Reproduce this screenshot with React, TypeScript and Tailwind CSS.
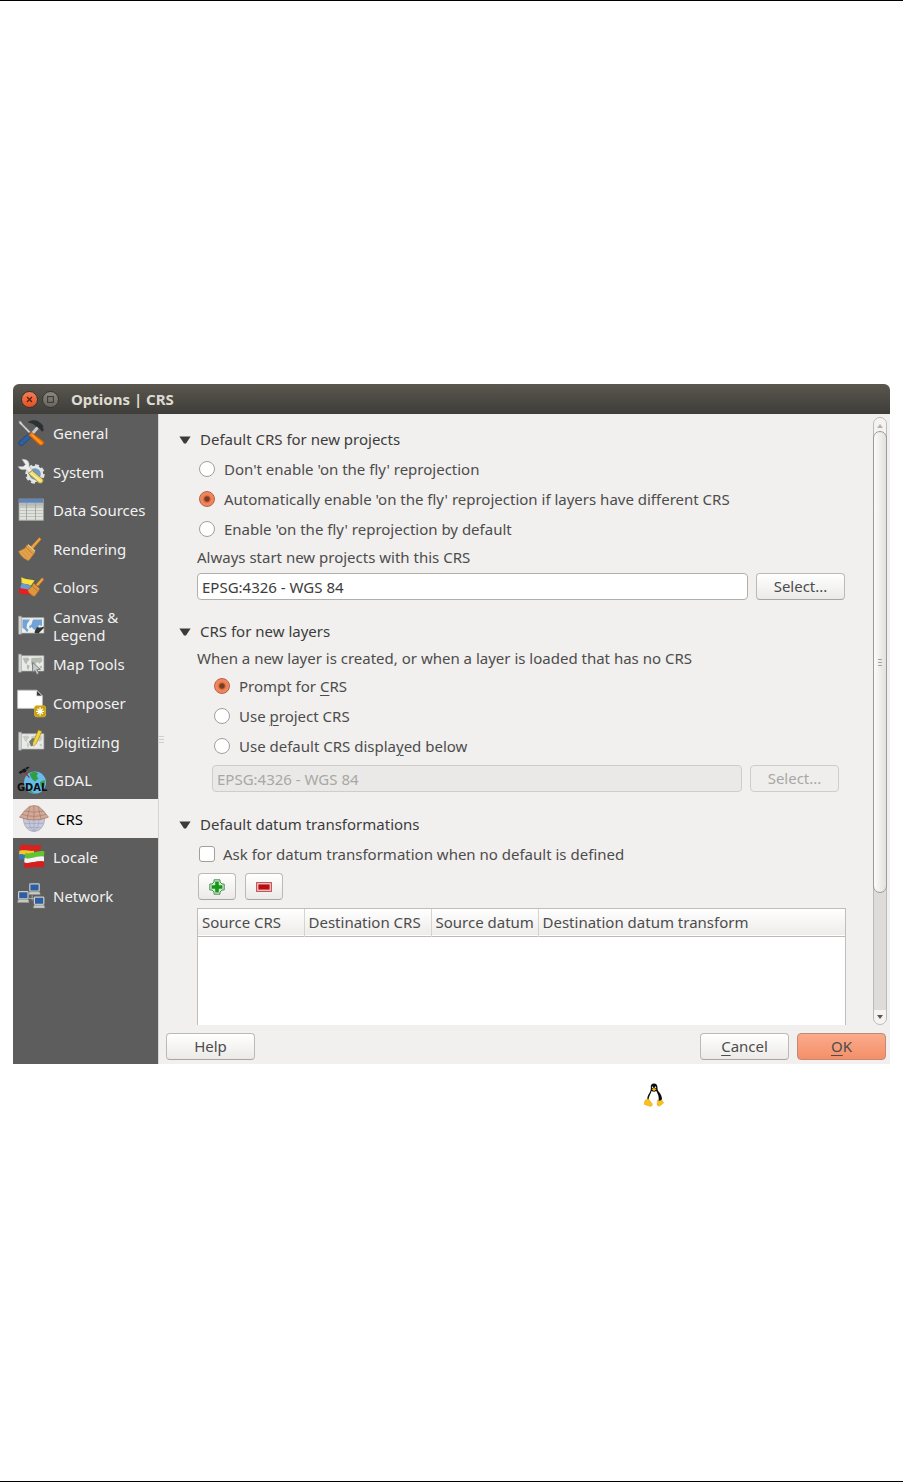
import { useState } from "react";
import type { ReactNode } from "react";
import clsx from "clsx";

function GeneralIcon() {
  return (
    <>
      <path d="M2 2 L4 2.6 L5.5 5 L14 13.4 L12.6 14.8 L4.6 6.2 L2.4 4.6 Z" fill="#d9dcda" stroke="#8b8e8b" strokeWidth=".5" />
      <path d="M11 3.2 C14 .8 19 .8 21.5 2.6 L23.5 4 L26 6.4 L26.6 12 L24.8 12.4 L22.6 9.8 L20.2 10.2 L18 6.5 C16 4.6 13.5 4.2 11 3.2 Z" fill="#2c3233" />
      <path d="M19.6 7.4 L21.8 9.6 L13.8 18.4 L11.8 16.2 Z" fill="#c9cbc8" />
      <path d="M13.2 13.4 L16.2 16.4 L5.6 26.2 C3.4 27.4 .6 25 2 22.8 Z" fill="#2f5f9e" stroke="#1d3f73" strokeWidth=".7" />
      <path d="M14.4 13.2 L11.6 16 L22.6 26 C25 27.4 28 24.4 26.4 22.4 Z" fill="#f57900" stroke="#b85200" strokeWidth=".7" />
      <path d="M14.6 15.4 L24.4 24.6" stroke="#ffa548" strokeWidth="1.2" />
    </>
  );
}

function SystemIcon() {
  return (
    <>
      <circle cx="18" cy="16" r="8.2" fill="none" stroke="#dfe2df" strokeWidth="3" strokeDasharray="3.8 2.6" />
      <circle cx="18" cy="16" r="7" fill="#6f9bcb" stroke="#e3e6e3" strokeWidth="2.4" />
      <path d="M5 1.4 C10 .6 13 4 12 8.2 L15.6 12.6 L12.8 15.4 L8.6 11.4 C5 12.4 2 11 1.2 8.4 L6.2 8.6 L8.4 6.4 Z" fill="#eceeec" stroke="#a5a8a5" strokeWidth=".6" />
      <path d="M11.2 15.4 L15.2 12.4 L26 21.4 C26.6 24.2 24.4 26 22.2 25 Z" fill="#ecd774" stroke="#95812a" strokeWidth=".8" />
      <path d="M14 15.2 L23.6 23.2" stroke="#fff2a8" strokeWidth="1.2" />
    </>
  );
}

function TableIcon() {
  return (
    <>
      <rect x="2" y="3" width="24.4" height="21.4" fill="#d3d7cf" stroke="#a3a69f" strokeWidth=".7" />
      <rect x="2" y="3" width="24.4" height="3.8" fill="#5f87bd" />
      <rect x="2.2" y="7" width="24" height="3.4" fill="#b9bcb6" />
      <path d="M3 13 H25.6 M3 16 H25.6 M3 19 H25.6 M3 22 H25.6" stroke="#eceeea" strokeWidth="1.2" />
      <path d="M3 11.5 H25.6 M3 14.5 H25.6 M3 17.5 H25.6 M3 20.5 H25.6" stroke="#b2b5ae" strokeWidth=".6" />
      <path d="M9.5 7 V24.2 M18.5 7 V24.2" stroke="#a0a39c" strokeWidth=".9" />
    </>
  );
}

function BroomIcon() {
  return (
    <>
      <path d="M22.4 2.2 L24.4 4.2 L16 14 L13.6 11.8 Z" fill="#e7a44a" stroke="#9c6218" strokeWidth=".7" />
      <path d="M10.2 9.8 L18 17 L16.4 19.4 L11.8 25.6 C7.4 24.4 3.4 20.8 1.6 16.4 L8 13.2 Z" fill="#e2a04a" stroke="#b37a30" strokeWidth=".6" />
      <path d="M9 12.4 L15.6 18.6" stroke="#b9762a" strokeWidth=".8" />
      <path d="M5 17 L10.4 22.8 M8 15.4 L13 20.8" stroke="#d08f3a" strokeWidth=".7" />
      <path d="M11 9.8 L18 16.2" stroke="#f7cf8d" strokeWidth="1.3" />
    </>
  );
}

function ColorsIcon() {
  return (
    <>
      <path d="M4.4 4 C8 7 13 6 17.6 7.6 L14 12.6 C10 10.6 7 11.4 4.6 10 Z" fill="#fbe33a" />
      <path d="M4.6 10 C8 11.6 10.6 10.8 14.6 12.6 L11 17.6 C8 15.6 5.4 16.4 3.2 15 Z" fill="#6c9bd0" />
      <path d="M2.6 14.8 C6 16.6 10 15.4 14 17.6 L15 22.4 C10 20 6 22.4 1.8 20 Z" fill="#ec1c24" />
      <path d="M25 4.6 L27 6.4 L21 13.6 L18.8 11.6 Z" fill="#e7a44a" stroke="#9c6218" strokeWidth=".6" />
      <path d="M16.6 10 L23 15.8 L21.6 18.2 L17.6 23.6 C14.6 22.8 12 20.4 10.6 17.2 L14.6 13.4 Z" fill="#dc9740" stroke="#9a611c" strokeWidth=".7" />
      <path d="M15.4 13.2 L20.6 18" stroke="#b06e24" strokeWidth=".8" />
    </>
  );
}

function MapSheet({ land }: { land: string }) {
  return (
    <>
      <path d="M3.6 5.8 H26.8 V21 H3.6 Z" fill="#e9ebe8" stroke="#b7bab6" strokeWidth=".7" />
      <path d="M1.6 4.2 H4.4 V22.2 H1.6 Z" fill="#d2d5d1" stroke="#9a9d99" strokeWidth=".6" />
      <path d="M5.6 8 L11 7.4 L12.6 9.4 L10.6 11.4 L9.4 14.6 L7.6 12.6 Z M10 14.4 L12.8 15.8 L11.2 20 L9.8 18 Z M14.4 8 L25 7.6 L25.4 11 L22.6 13.8 L20.6 12 L18.6 13.6 L17.6 18.6 L15.6 17.2 L14 13 Z M22.6 16 L25 15.8 L25 18.6 L23 18.2 Z" fill={land} />
    </>
  );
}

function CanvasIcon() {
  return (
    <>
      <path d="M3.6 5.8 H26.8 V21 H3.6 Z" fill="#f0f1ef" stroke="#c4c7c3" strokeWidth=".7" />
      <path d="M1.6 4.2 H4.4 V22.2 H1.6 Z" fill="#d2d5d1" stroke="#9a9d99" strokeWidth=".6" />
      <path d="M5.4 7.6 H13 L10 12 L9.6 16 L11.6 18 L10 20.2 L7.4 17 L5.4 16 Z M16 7.6 H25 V14 L22 13 L20.6 16.4 L17 17.8 L14.6 15 L12.8 16.6 L12 14.2 L14.4 12.4 Z" fill="#72a2d6" />
      <path d="M17.6 21 C17.6 18.6 19 16.4 20.4 15 C22.4 16 25 15.6 26.8 14.6 L26.8 16 L21.4 21.4 Z" fill="#2e3436" />
    </>
  );
}

function MapToolsIcon() {
  return (
    <>
      <MapSheet land="#b6bbb2" />
      <path d="M15.6 12.4 L23.4 19.4 L19.8 19.6 L22 23.4 L19.8 24.4 L18 20.6 L15.6 22.6 Z" fill="#c8cbc8" stroke="#66686a" strokeWidth=".8" />
    </>
  );
}

function ComposerIcon() {
  return (
    <>
      <path d="M.6 1.2 H19.6 L25.4 7 V19.4 H.6 Z" fill="#fff" stroke="#bfc1bf" strokeWidth=".8" />
      <path d="M19.6 1.2 L25.4 7 H19.6 Z" fill="#303436" stroke="#dedfde" strokeWidth=".8" />
      <rect x="17.6" y="16.8" width="11" height="11" rx="1.8" fill="#c9a20c" stroke="#dcb92f" strokeWidth=".8" />
      <path d="M23.1 18.2 V26.4 M19 22.3 H27.2 M20.4 19.6 L25.8 25 M25.8 19.6 L20.4 25" stroke="#fff" strokeWidth="1.3" />
    </>
  );
}

function DigitizingIcon() {
  return (
    <>
      <MapSheet land="#c8ccc4" />
      <path d="M12 13.6 L15.6 10 L19.6 11.4 L17 17 L14 18.6 Z" fill="#72786f" />
      <path d="M21.4 2 L24.8 3.4 L19.4 15.6 L16.2 18.2 L16 14.4 Z" fill="#f4d53a" stroke="#a38718" strokeWidth=".7" />
      <path d="M16 14.4 L19.4 15.6 L16.2 18.2 Z" fill="#e9c98b" />
    </>
  );
}

function GdalIcon() {
  return (
    <>
      <circle cx="18" cy="16.6" r="11" fill="#66bde9" />
      <path d="M12.6 8 C15 5.6 19 5.6 21 7.4 L19.6 10 L21.4 12.4 L18 15.4 L15.4 13.4 L13.8 11 Z" fill="#2f9e45" />
      <path d="M23 16 L27.4 14 C28.6 17 27.8 20.8 26 22.8 L23.6 20 Z M12 24.4 L15 25.2 L16.6 27 L13 26.4 Z" fill="#389f4c" />
      <path d="M7.6 5.6 L12.4 11.6" stroke="#9b2f4b" strokeWidth="1.2" />
      <path d="M1.4 6.4 L4.4 4.2 L6.4 5.8 L3.6 8 Z M5.2 3.4 L8 2.2 L9.8 4.8 L7 7 L5.4 5.4 Z M8.4 1.8 L12 .4 L12.4 1.6 L9.8 3.8 Z" fill="#17191a" />
      <text x="0" y="25" fontFamily="'Liberation Sans Narrow', 'DejaVu Sans Condensed', sans-serif" fontWeight="700" fontSize="11" fill="#0c0d0e">GDAL</text>
    </>
  );
}

function CrsIcon() {
  return (
    <>
      <path d="M3.4 13 H24.6 C24.6 20.6 20.4 26.4 14 26.4 C7.6 26.4 3.4 20.6 3.4 13 Z" fill="#c6c8da" stroke="#9a9cb6" strokeWidth=".7" />
      <path d="M9 13 C9 20 11 25 14 26 C17 25 19 20 19 13 M14 13 V26 M4.4 18.4 H23.6 M7.4 22.6 H20.6" fill="none" stroke="#9a9cb6" strokeWidth=".6" />
      <path d="M9.4 1.4 L14 .6 L18.6 1.4 L23.6 6 L28.4 12.2 L21 14.4 L14 15 L7 14.4 L-.4 12.2 L4.4 6 Z" fill="#d3a896" stroke="#9d7668" strokeWidth=".7" />
      <path d="M4.4 6 L14 7.2 L23.6 6 M2 9.4 L8 10.8 L14 11.4 L20 10.8 L26 9.4 M9.6 1.8 L8.6 7 L7 14.2 M18.4 1.8 L19.4 7 L21 14.2 M14 1 V15" fill="none" stroke="#9d7668" strokeWidth=".6" />
    </>
  );
}

function LocaleIcon() {
  return (
    <>
      <path d="M3 2.4 C9 .6 13 4 23.6 1.8 V7.4 C14 9 9 6.4 2.4 7.8 Z" fill="#dd1f1f" />
      <path d="M2.4 7.8 C8 6.4 12 8.4 17 7.8 V12.6 H2 Z" fill="#f6c62c" />
      <path d="M2 11.4 C5 10.2 7 11.6 9 12 V16.6 C6 15.6 4 15.8 2 16.8 Z" fill="#3b73b9" />
      <path d="M8.4 10 C14 12 20 6.4 27.4 8.4 L27 13.6 C20 12 14 17 7.6 15 Z" fill="#5fc52e" />
      <path d="M7.6 15 C14 17 20 12 27 13.6 L27 18.8 C20 17 14 21.4 7.2 19.4 Z" fill="#f4f4f3" />
      <path d="M7.2 19.4 C14 21.4 20 17 27 18.8 L27.2 24.6 C20 22.6 14 26 6.8 24 Z" fill="#d91c1c" />
    </>
  );
}

function Computer({ x, y }: { x: number; y: number }) {
  return (
    <g transform={`translate(${x} ${y})`}>
      <rect x=".4" y=".4" width="9.4" height="7.2" rx=".8" fill="#2d5ea3" stroke="#c9ccc8" strokeWidth="1.2" />
      <path d="M0 8.4 H10.2 L10.8 11.2 H-.6 Z" fill="#c9ccc7" stroke="#93968f" strokeWidth=".5" />
    </g>
  );
}

function NetworkIcon() {
  return (
    <>
      <path d="M12 16.4 H17.6 M15.2 13.4 V18.4" stroke="#a9aca8" strokeWidth="1" />
      <Computer x={12.4} y={1.4} />
      <Computer x={1.2} y={9.2} />
      <Computer x={17} y={14.8} />
    </>
  );
}

const PAGES: { name: string; icon: ReactNode }[] = [
  { name: "General", icon: <GeneralIcon /> },
  { name: "System", icon: <SystemIcon /> },
  { name: "Data Sources", icon: <TableIcon /> },
  { name: "Rendering", icon: <BroomIcon /> },
  { name: "Colors", icon: <ColorsIcon /> },
  { name: "Canvas & Legend", icon: <CanvasIcon /> },
  { name: "Map Tools", icon: <MapToolsIcon /> },
  { name: "Composer", icon: <ComposerIcon /> },
  { name: "Digitizing", icon: <DigitizingIcon /> },
  { name: "GDAL", icon: <GdalIcon /> },
  { name: "CRS", icon: <CrsIcon /> },
  { name: "Locale", icon: <LocaleIcon /> },
  { name: "Network", icon: <NetworkIcon /> },
];

const BUTTON =
  "h-[27px] rounded-[4px] border border-[#bdbab6] border-b-[#a9a6a2] bg-linear-to-b from-white to-[#ebeae8] text-[#4c4c4c] disabled:border-[#cfcdca] disabled:bg-none disabled:bg-[#efeeed] disabled:text-[#a9a7a5]";

const FIELD =
  "h-[27px] min-w-0 flex-1 rounded-[4px] border border-[#b2afab] bg-white px-1 text-[#3c3c3c] disabled:border-[#cfcdca] disabled:bg-[#eae9e7] disabled:text-[#a9a7a5]";

function Section({ title, children }: { title: string; children: ReactNode }) {
  const [open, setOpen] = useState(true);
  return (
    <section>
      <button type="button" aria-expanded={open} onClick={() => setOpen(!open)} className="flex h-[30px] items-center gap-[9px] text-[#3c3c3c]">
        <svg viewBox="0 0 12 10" className={clsx("h-[10px] w-3", !open && "-rotate-90")}>
          <path d="M.4 2.6 H11.6 L7 9.4 H5 Z" fill="#3c3b37" />
        </svg>
        {title}
      </button>
      {open && <div className="pl-[18px]">{children}</div>}
    </section>
  );
}

function Radio({ name, checked, children }: { name: string; checked?: boolean; children: ReactNode }) {
  return (
    <label className="flex h-[30px] items-center gap-[9px] pl-[2px]">
      <input
        type="radio"
        name={name}
        defaultChecked={checked}
        className="size-4 shrink-0 appearance-none rounded-full border border-[#a19f9b] bg-white checked:border-[#b45f42] checked:bg-[radial-gradient(circle,#7a3b25_0,#7a3b25_2px,#ef7f55_4px,#f08a60_7px)]"
      />
      <span>{children}</span>
    </label>
  );
}

function Key({ children }: { children: string }) {
  return <span className="underline decoration-1 underline-offset-[3px]">{children}</span>;
}

function Scrollbar() {
  return (
    <div className="mt-[3px] mr-[3px] flex w-[14px] shrink-0 flex-col rounded-full border border-[#bdbab6] bg-[#dddcda]">
      <button type="button" aria-label="Scroll up" className="-mb-2 flex h-[21px] shrink-0 justify-center rounded-t-full bg-[#f4f3f2] pt-[6px]">
        <svg viewBox="0 0 6 4" className="h-1 w-[6px]"><path d="M0 4 L3 0 L6 4 Z" fill="#b7b5b2" /></svg>
      </button>
      <div className="-mx-px flex h-[462px] flex-col items-center justify-center gap-[2px] rounded-full border border-[#9d9b97] bg-linear-to-r from-[#fbfbfb] to-[#e2e1df]">
        <span className="h-px w-1 bg-[#a5a39f]" />
        <span className="h-px w-1 bg-[#a5a39f]" />
        <span className="h-px w-1 bg-[#a5a39f]" />
      </div>
      <div className="min-h-0 flex-1" />
      <button type="button" aria-label="Scroll down" className="flex h-[14px] shrink-0 items-center justify-center rounded-b-full bg-[#f4f3f2]">
        <svg viewBox="0 0 6 4" className="h-1 w-[6px]"><path d="M0 0 L3 4 L6 0 Z" fill="#5a5855" /></svg>
      </button>
    </div>
  );
}

function Penguin() {
  return (
    <svg viewBox="0 0 20 24" role="img" aria-label="Linux" className="h-6 w-5">
      <path d="M10 .6 C7.4 .6 6.6 2.4 6.8 4.6 C7 7.4 6.4 8.6 5 10.8 C3.6 13 3.2 15 3 17 L6 22 H14 L18 17 C18.2 14 17 11.4 15 9 C13.4 7 13.6 6 13.4 4 C13.2 1.8 12.4 .6 10 .6 Z" fill="#0b0b0b" />
      <path d="M7.6 8 C9.4 9 11 9 12.2 7.8 C14 11 15.2 14 14.6 17.6 L13.6 22 H7 L4.6 16.6 C4.8 13.4 6.6 11 7.6 8 Z" fill="#fff" />
      <circle cx="8.6" cy="4.2" r=".8" fill="#fff" />
      <circle cx="11.4" cy="4.2" r=".8" fill="#fff" />
      <path d="M7.6 6 L10 5 L12.6 6 L10 8.2 Z" fill="#f5b800" />
      <path d="M4 15.6 L8.4 21 C8.4 23.4 6.4 23.8 4.6 22.8 L.4 21.4 C0 20 .8 19 1 17.6 Z" fill="#fcc21b" stroke="#c98f00" strokeWidth=".4" />
      <path d="M13.6 17 C15 18.4 16.4 18 17.6 16.4 L19.6 20 L15.6 23 C13.4 23.6 12.8 21.6 13.6 17 Z" fill="#fcc21b" stroke="#c98f00" strokeWidth=".4" />
    </svg>
  );
}

export default function App() {
  const [page, setPage] = useState("CRS");

  return (
    <div className="flex min-h-screen flex-col border-y border-black bg-white px-[13px] pt-[383px] font-['Noto_Sans','Open_Sans',sans-serif] text-[15px] text-[#4c4c4c]">
      <main className="overflow-hidden rounded-t-[6px] bg-[#f1f0ee]">
        <header className="flex h-[30px] items-center gap-1 bg-linear-to-b from-[#59574e] to-[#3e3d39] px-2">
          <button type="button" aria-label="Close" className="flex size-[17px] items-center justify-center rounded-full border border-[#38342e] bg-linear-to-b from-[#f47c54] to-[#e2511f]">
            <svg viewBox="0 0 7 7" className="size-[7px]"><path d="M1 1 L6 6 M6 1 L1 6" stroke="#54210f" strokeWidth="1.3" /></svg>
          </button>
          <button type="button" aria-label="Maximize" className="flex size-[17px] items-center justify-center rounded-full border border-[#38342e] bg-linear-to-b from-[#8a877d] to-[#67655d]">
            <svg viewBox="0 0 7 7" className="size-[7px]"><rect x=".6" y=".6" width="5.8" height="5.8" fill="none" stroke="#3c3b37" strokeWidth="1.1" /></svg>
          </button>
          <h1 className="ml-2 font-bold text-[#dfdbd2]">Options | CRS</h1>
        </header>

        <div className="flex">
          <nav className="w-[146px] shrink-0 border-r border-[#d6d4d1] bg-[#5d5d5d]">
            <ul className="flex h-[501px] flex-col">
              {PAGES.map((p) => (
                <li key={p.name} className="flex min-h-0 flex-1">
                  <button
                    type="button"
                    onClick={() => setPage(p.name)}
                    className={clsx(
                      "flex flex-1 items-center gap-2 text-left leading-[18px]",
                      page === p.name ? "bg-[#f1f0ee] pl-[7px] text-black" : "pl-1 text-[#f2f2f2]"
                    )}
                  >
                    <svg viewBox="0 0 28 28" className="size-7 shrink-0 overflow-visible">{p.icon}</svg>
                    <span className={clsx(p.name === "Canvas & Legend" && "w-[70px]")}>{p.name}</span>
                  </button>
                </li>
              ))}
            </ul>
          </nav>

          <div className="flex w-[7px] shrink-0 flex-col justify-center gap-[2px]">
            <span className="h-px w-[5px] bg-[#cfcdca]" />
            <span className="h-px w-[5px] bg-[#cfcdca]" />
            <span className="h-px w-[5px] bg-[#cfcdca]" />
          </div>

          <div className="min-w-0 flex-1">
            <div className="flex">
              <div className="min-w-0 flex-1 pt-[10px] pr-[27px] pl-[13px]">
                <Section title="Default CRS for new projects">
                  <Radio name="otf">Don't enable 'on the fly' reprojection</Radio>
                  <Radio name="otf" checked>Automatically enable 'on the fly' reprojection if layers have different CRS</Radio>
                  <Radio name="otf">Enable 'on the fly' reprojection by default</Radio>
                  <label htmlFor="project-crs" className="flex h-[26px] items-center">Always start new projects with this CRS</label>
                  <div className="mt-[3px] mb-4 flex gap-2 pr-px">
                    <input id="project-crs" defaultValue="EPSG:4326 - WGS 84" className={FIELD} />
                    <button type="button" className={clsx(BUTTON, "w-[89px]")}>Select...</button>
                  </div>
                </Section>

                <Section title="CRS for new layers">
                  <p className="flex h-[25px] items-center">When a new layer is created, or when a layer is loaded that has no CRS</p>
                  <div className="pr-[7px] pl-[15px]">
                    <Radio name="layer" checked>Prompt for <Key>C</Key>RS</Radio>
                    <Radio name="layer">Use <Key>p</Key>roject CRS</Radio>
                    <Radio name="layer">Use default CRS displa<Key>y</Key>ed below</Radio>
                    <div className="mt-1 mb-[17px] flex gap-2">
                      <input aria-label="Default CRS" defaultValue="EPSG:4326 - WGS 84" disabled className={FIELD} />
                      <button type="button" disabled className={clsx(BUTTON, "w-[89px]")}>Select...</button>
                    </div>
                  </div>
                </Section>

                <Section title="Default datum transformations">
                  <label className="flex h-[30px] items-center gap-2 pl-[2px]">
                    <input type="checkbox" className="size-4 appearance-none rounded-[3px] border border-[#a19f9b] bg-white checked:bg-[#ef7f55]" />
                    Ask for datum transformation when no default is defined
                  </label>
                  <div className="mt-1 mb-2 flex gap-[9px] pl-px">
                    <button type="button" aria-label="Add transformation" className={clsx(BUTTON, "flex w-[38px] items-center justify-center")}>
                      <svg viewBox="0 0 16 16" className="size-4">
                        <path d="M5 .8 H11 V3 L13 5 H15.2 V11 H13 L11 13 V15.2 H5 V13 L3 11 H.8 V5 H3 L5 3 Z" fill="#d5ecd4" stroke="#4d8f52" strokeWidth="1" />
                        <path d="M6.2 2.6 H9.8 V6.2 H13.4 V9.8 H9.8 V13.4 H6.2 V9.8 H2.6 V6.2 H6.2 Z" fill="#129a18" />
                      </svg>
                    </button>
                    <button type="button" aria-label="Remove transformation" className={clsx(BUTTON, "flex w-[38px] items-center justify-center")}>
                      <svg viewBox="0 0 16 10" className="h-[10px] w-4">
                        <rect x=".6" y=".6" width="14.8" height="8.8" fill="#f3c9c9" stroke="#c0464a" />
                        <rect x="2.4" y="2.4" width="11.2" height="5.2" fill="#b80d12" />
                      </svg>
                    </button>
                  </div>
                  <div className="h-[117px] overflow-hidden border border-b-0 border-[#c0bebb] bg-white">
                    <table className="w-full table-fixed border-collapse text-left">
                      <thead>
                        <tr className="h-[27px] border-b border-[#bdbab6] bg-linear-to-b from-white to-[#edecea]">
                          <th className="w-[106px] border-r border-[#d6d4d1] px-1 font-normal">Source CRS</th>
                          <th className="w-[127px] border-r border-[#d6d4d1] px-1 font-normal whitespace-nowrap">Destination CRS</th>
                          <th className="w-[107px] border-r border-[#d6d4d1] px-1 font-normal whitespace-nowrap">Source datum</th>
                          <th className="px-1 font-normal">Destination datum transform</th>
                        </tr>
                      </thead>
                    </table>
                  </div>
                </Section>
              </div>
              <Scrollbar />
            </div>

            <footer className="flex gap-2 pt-2 pr-1 pb-1">
              <button type="button" className={clsx(BUTTON, "mr-auto w-[89px]")}>Help</button>
              <button type="button" className={clsx(BUTTON, "w-[89px]")}><Key>C</Key>ancel</button>
              <button type="button" className="h-[27px] w-[89px] rounded-[4px] border border-[#c08a74] bg-linear-to-b from-[#fbab8c] to-[#f48f68] text-[#4c4c4c]"><Key>O</Key>K</button>
            </footer>
          </div>
        </div>
      </main>

      <div className="flex justify-end pt-[19px] pr-[226px]">
        <Penguin />
      </div>
    </div>
  );
}
